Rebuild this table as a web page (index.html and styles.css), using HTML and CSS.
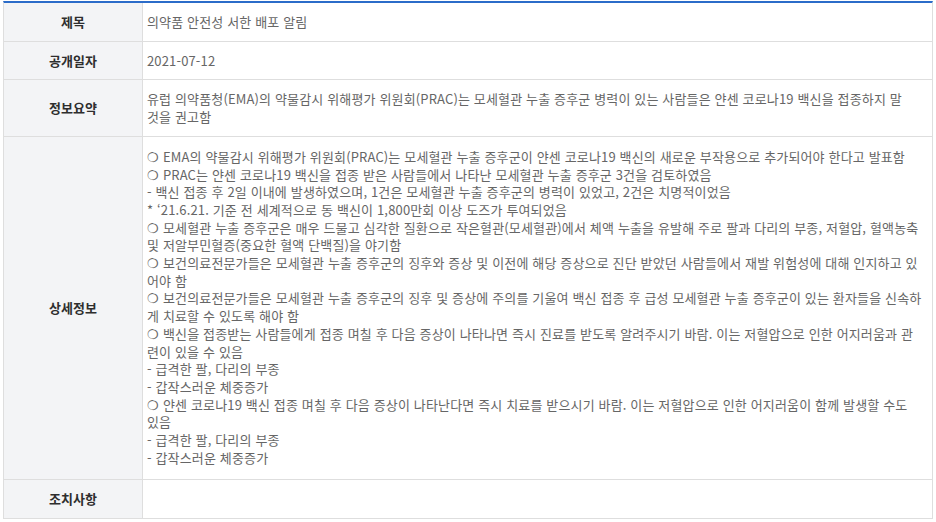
FILE: index.html
```html
<!DOCTYPE html>
<html lang="ko">
<head>
    <meta charset="UTF-8">
    <meta name="viewport" content="width=device-width, initial-scale=1.0">
    <title>의약품 안전성 서한</title>
    <link rel="stylesheet" href="styles.css">
</head>
<body>
    <div class="wrap">
        <div class="info-table">
            <div class="label">제목</div>
            <div class="value">의약품 안전성 서한 배포 알림</div>

            <div class="label">공개일자</div>
            <div class="value">2021-07-12</div>

            <div class="label">정보요약</div>
            <div class="value summary">유럽 의약품청(EMA)의 약물감시 위해평가 위원회(PRAC)는 모세혈관 누출 증후군 병력이 있는 사람들은 얀센 코로나19 백신을 접종하지 말것을 권고함</div>

            <div class="label">상세정보</div>
            <div class="value detail">
                ❍ EMA의 약물감시 위해평가 위원회(PRAC)는 모세혈관 누출 증후군이 얀센 코로나19 백신의 새로운 부작용으로 추가되어야 한다고 발표함<br>
                ❍ PRAC는 얀센 코로나19 백신을 접종 받은 사람들에서 나타난 모세혈관 누출 증후군 3건을 검토하였음<br>
                - 백신 접종 후 2일 이내에 발생하였으며, 1건은 모세혈관 누출 증후군의 병력이 있었고, 2건은 치명적이었음<br>
                * ‘21.6.21. 기준 전 세계적으로 동 백신이 1,800만회 이상 도즈가 투여되었음<br>
                ❍ 모세혈관 누출 증후군은 매우 드물고 심각한 질환으로 작은혈관(모세혈관)에서 체액 누출을 유발해 주로 팔과 다리의 부종, 저혈압, 혈액농축 및 저알부민혈증(중요한 혈액 단백질)을 야기함<br>
                ❍ 보건의료전문가들은 모세혈관 누출 증후군의 징후와 증상 및 이전에 해당 증상으로 진단 받았던 사람들에서 재발 위험성에 대해 인지하고 있어야 함<br>
                ❍ 보건의료전문가들은 모세혈관 누출 증후군의 징후 및 증상에 주의를 기울여 백신 접종 후 급성 모세혈관 누출 증후군이 있는 환자들을 신속하게 치료할 수 있도록 해야 함<br>
                ❍ 백신을 접종받는 사람들에게 접종 며칠 후 다음 증상이 나타나면 즉시 진료를 받도록 알려주시기 바람. 이는 저혈압으로 인한 어지러움과 관련이 있을 수 있음<br>
                - 급격한 팔, 다리의 부종<br>
                - 갑작스러운 체중증가<br>
                ❍ 얀센 코로나19 백신 접종 며칠 후 다음 증상이 나타난다면 즉시 치료를 받으시기 바람. 이는 저혈압으로 인한 어지러움이 함께 발생할 수도 있음<br>
                - 급격한 팔, 다리의 부종<br>
                - 갑작스러운 체중증가
            </div>

            <div class="label">조치사항</div>
            <div class="value"></div>
        </div>
    </div>
</body>
</html>
```

FILE: styles.css
```css
body {
    margin: 0;
    padding: 0;
    background: #fff;
    font-family: "Noto Sans CJK KR", "Noto Sans", sans-serif;
}
.wrap {
    padding: 1px 3px 0 3px;
}
.info-table {
    width: 930px;
    box-sizing: border-box;
    display: grid;
    grid-template-columns: 139px 1fr;
    border-top: 2px solid #2b6cc9;
    border-left: 1px solid #dedede;
    border-right: 1px solid #dedede;
}
.label {
    background-color: #f3f4f6;
    border-right: 1px solid #dedede;
    border-bottom: 1px solid #dedede;
    display: flex;
    align-items: center;
    justify-content: center;
    font-size: 13px;
    font-weight: bold;
    color: #2e2e2e;
    line-height: 17.7px;
}
.value {
    border-bottom: 1px solid #dedede;
    padding: 10px 9px 10px 4px;
    min-height: 17.7px;
    font-size: 13px;
    letter-spacing: 0.15px;
    line-height: 17.7px;
    color: #666;
}
.info-table .value:first-of-type {
    padding-top: 11px;
}
.summary {
    padding-right: 18px;
}
.detail {
    padding-top: 11px;
    padding-bottom: 13px;
}
```
